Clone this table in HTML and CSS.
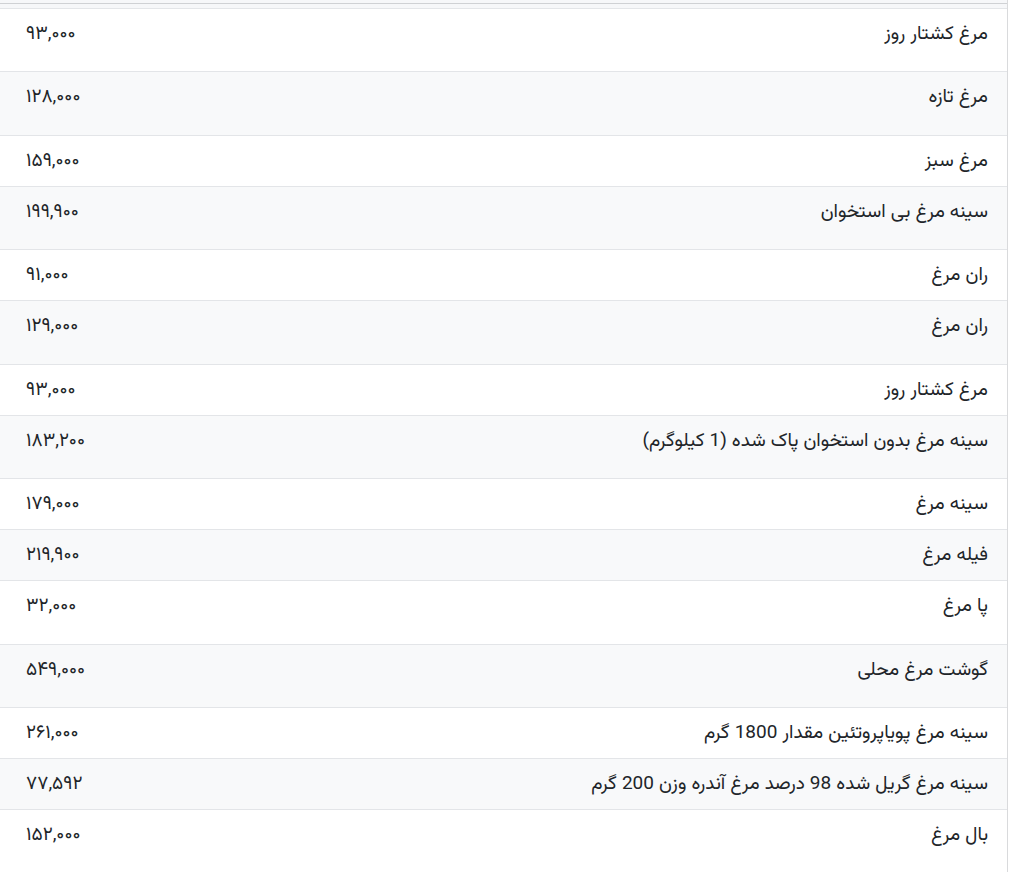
FILE: index.html
```html
<!DOCTYPE html>
<html lang="fa">
<head>
<meta charset="utf-8">
<title>قیمت مرغ</title>
<link rel="stylesheet" href="styles.css">
</head>
<body>
<div class="wrap" dir="rtl">
  <div class="top-strip"><div class="top-line"></div></div>
  <div class="table">
    <div class="row tall"><span class="name">مرغ کشتار روز</span><span class="price">۹۳,۰۰۰</span></div>
    <div class="row taller alt"><span class="name">مرغ تازه</span><span class="price">۱۲۸,۰۰۰</span></div>
    <div class="row"><span class="name">مرغ سبز</span><span class="price">۱۵۹,۰۰۰</span></div>
    <div class="row tall alt"><span class="name">سینه مرغ بی استخوان</span><span class="price">۱۹۹,۹۰۰</span></div>
    <div class="row"><span class="name">ران مرغ</span><span class="price">۹۱,۰۰۰</span></div>
    <div class="row taller alt"><span class="name">ران مرغ</span><span class="price">۱۲۹,۰۰۰</span></div>
    <div class="row"><span class="name">مرغ کشتار روز</span><span class="price">۹۳,۰۰۰</span></div>
    <div class="row tall alt"><span class="name">سینه مرغ بدون استخوان پاک شده (1 کیلوگرم)</span><span class="price">۱۸۳,۲۰۰</span></div>
    <div class="row"><span class="name">سینه مرغ</span><span class="price">۱۷۹,۰۰۰</span></div>
    <div class="row alt"><span class="name">فیله مرغ</span><span class="price">۲۱۹,۹۰۰</span></div>
    <div class="row taller"><span class="name">پا مرغ</span><span class="price">۳۲,۰۰۰</span></div>
    <div class="row tall alt"><span class="name">گوشت مرغ محلی</span><span class="price">۵۴۹,۰۰۰</span></div>
    <div class="row"><span class="name">سینه مرغ پویاپروتئین مقدار 1800 گرم</span><span class="price">۲۶۱,۰۰۰</span></div>
    <div class="row alt"><span class="name">سینه مرغ گریل شده 98 درصد مرغ آندره وزن 200 گرم</span><span class="price">۷۷,۵۹۲</span></div>
    <div class="row tall"><span class="name">بال مرغ</span><span class="price">۱۵۲,۰۰۰</span></div>
  </div>
</div>
</body>
</html>
```
FILE: styles.css
```css
html, body {
  margin: 0;
  padding: 0;
  background: #ffffff;
}
body {
  font-family: "Vazirmatn", "Noto Sans Arabic", "DejaVu Sans", sans-serif;
  font-size: 19px;
  color: #212529;
}
.wrap {
  width: 1008px;
  box-sizing: border-box;
  border-right: 1px solid #d9dadc;
  direction: rtl;
}
.top-strip {
  height: 8px;
  background: #f6f7f9;
  padding-top: 3px;
  box-sizing: border-box;
}
.top-line {
  height: 1px;
  background: #cfd1d4;
}
.row {
  display: flex;
  justify-content: space-between;
  align-items: flex-start;
  height: 51px;
  box-sizing: border-box;
  border-top: 1px solid #e3e5e8;
  padding: 11px 19px 0 26px;
  background: #ffffff;
  line-height: 30px;
}
.row.tall {
  height: 63px;
}
.row.taller {
  height: 64px;
}
.row.alt {
  background: #f8f9fa;
}
.name {
  white-space: nowrap;
}
.price {
  direction: ltr;
  unicode-bidi: isolate;
}
```
